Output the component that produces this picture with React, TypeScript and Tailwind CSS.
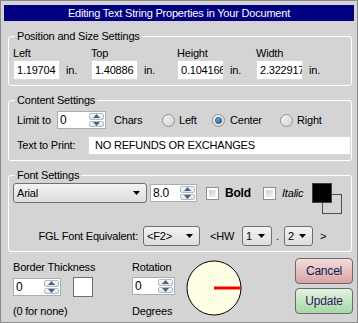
import React from "react";

function SpinArrows() {
  return (
    <div className="flex w-[16px] flex-col gap-[1px] py-[1px] pr-[1px]">
      <div className="flex flex-1 items-center justify-center rounded-[2px] border border-[#b5bac3] bg-gradient-to-b from-[#f7f8fa] to-[#dfe4ec]">
        <svg width="7" height="4" viewBox="0 0 7 4">
          <path d="M3.5 0L7 4H0z" fill="#4d6183" />
        </svg>
      </div>
      <div className="flex flex-1 items-center justify-center rounded-[2px] border border-[#b5bac3] bg-gradient-to-b from-[#f7f8fa] to-[#dfe4ec]">
        <svg width="7" height="4" viewBox="0 0 7 4">
          <path d="M0 0h7L3.5 4z" fill="#4d6183" />
        </svg>
      </div>
    </div>
  );
}

function Spin({ value, w }: { value: string; w: string }) {
  return (
    <div className={`flex h-[18px] ${w} border border-[#abadb3] bg-white`}>
      <div className="flex-1 pl-[2px] text-[12px] leading-[16px]">{value}</div>
      <SpinArrows />
    </div>
  );
}

function Combo({ label, w }: { label: string; w: string }) {
  return (
    <div
      className={`flex h-[20px] ${w} items-center rounded-[3px] border border-[#707070] bg-gradient-to-b from-[#f3f3f3] to-[#dddddd] pl-[3px] pr-[6px]`}
    >
      <span className="flex-1 whitespace-nowrap">{label}</span>
      <svg width="7" height="4" viewBox="0 0 7 4">
        <path d="M0 0h7L3.5 4z" fill="#000" />
      </svg>
    </div>
  );
}

function TextBox({ value, w }: { value: string; w: string }) {
  return (
    <div
      className={`h-[20px] ${w} overflow-hidden whitespace-nowrap border border-[#d8d8d8] bg-white pl-[3px] text-[11px] leading-[18px]`}
    >
      {value}
    </div>
  );
}

function Radio({ checked }: { checked?: boolean }) {
  return (
    <div className="flex h-[13px] w-[13px] items-center justify-center rounded-full border border-[#8e8f8f] bg-gradient-to-br from-[#f4f4f4] to-[#d4d4d4]">
      {checked && (
        <div className="h-[7px] w-[7px] rounded-full border border-[#1b4f86] bg-gradient-to-br from-[#7ab8ea] to-[#1e5fa3]" />
      )}
    </div>
  );
}

function Check() {
  return (
    <div className="h-[13px] w-[13px] border border-[#8e8f8f] bg-white p-[2px]">
      <div className="h-full w-full bg-gradient-to-br from-[#cbcfd5] to-[#f2f3f4]" />
    </div>
  );
}

function Group({ title, className, children }: { title: string; className: string; children: React.ReactNode }) {
  return (
    <div className={`relative ml-[7px] w-[344px] rounded-[3px] border border-white ${className}`}>
      <span className="absolute -top-[7px] left-[6px] bg-[#d4d4d4] px-[2px] leading-[13px]">{title}</span>
      {children}
    </div>
  );
}

export default function App() {
  return (
    <div className="h-[323px] w-[358px] overflow-hidden border border-[#8a8a8a] bg-[#d4d4d4] font-['Liberation_Sans',Arial,sans-serif] text-[11px] tracking-[-0.2px] text-black">
      <div className="mx-[3px] mt-[4px] h-[16px] bg-[#000080] text-center leading-[16px] text-white">
        Editing Text String Properties in Your Document
      </div>

      <Group title="Position and Size Settings" className="mt-[15px] pb-[5px] pl-[4px] pt-[10px]">
        <div className="flex">
          {[
            ["Left", "1.19704", "w-[78px]"],
            ["Top", "1.40886", "w-[86px]"],
            ["Height", "0.104166", "w-[79px]"],
            ["Width", "2.322917", "w-[80px]"],
          ].map(([label, value, w]) => (
            <div key={label} className={w}>
              <div className="leading-[13px]">{label}</div>
              <div className="flex items-center">
                <TextBox value={value} w="w-[47px]" />
                <span className="ml-[6px]">in.</span>
              </div>
            </div>
          ))}
        </div>
      </Group>

      <Group title="Content Settings" className="mt-[14px] pb-[5px] pl-[8px] pt-[10px]">
        <div className="flex h-[18px] items-center">
          <span className="w-[40px]">Limit to</span>
          <Spin value="0" w="w-[49px]" />
          <span className="ml-[8px] w-[48px]">Chars</span>
          <div className="flex w-[50px] items-center gap-[4px]">
            <Radio />
            <span>Left</span>
          </div>
          <div className="flex w-[68px] items-center gap-[5px]">
            <Radio checked />
            <span>Center</span>
          </div>
          <div className="flex items-center gap-[4px]">
            <Radio />
            <span>Right</span>
          </div>
        </div>
        <div className="mt-[7px] flex items-center">
          <span className="w-[71px]">Text to Print:</span>
          <div className="h-[19px] flex-1 border border-[#d8d8d8] bg-white pl-[6px] leading-[17px]">
            NO REFUNDS OR EXCHANGES
          </div>
        </div>
      </Group>

      <Group title="Font Settings" className="mt-[14px] pb-[5px] pl-[4px] pt-[7px]">
        <div className="flex h-[20px] items-center">
          <Combo label="Arial" w="w-[134px]" />
          <div className="ml-[3px]">
            <Spin value="8.0" w="w-[47px]" />
          </div>
          <div className="ml-[9px] flex w-[57px] items-center gap-[6px]">
            <Check />
            <span className="text-[12px] font-bold">Bold</span>
          </div>
          <div className="flex w-[49px] items-center gap-[6px]">
            <Check />
            <span className="italic">Italic</span>
          </div>
          <div className="relative h-[20px] w-[31px] self-start">
            <div className="absolute left-[10px] top-[11px] h-[20px] w-[20px] border border-[#505050]" />
            <div className="absolute left-0 top-0 h-[20px] w-[20px] border border-[#404040] bg-black" />
          </div>
        </div>
        <div className="mt-[23px] flex h-[20px] items-center">
          <span className="w-[130px] whitespace-nowrap pr-[5px] text-right">FGL Font Equivalent:</span>
          <Combo label="<F2>" w="w-[57px]" />
          <span className="ml-[10px] w-[32px]">&lt;HW</span>
          <Combo label="1" w="w-[30px]" />
          <span className="w-[12px] pl-[4px]">.</span>
          <Combo label="2" w="w-[29px]" />
          <span className="ml-[7px]">&gt;</span>
        </div>
      </Group>

      <div className="flex items-start pl-[12px]">
        <div className="mt-[9px] w-[119px]">
          <div className="leading-[13px]">Border Thickness</div>
          <div className="mt-[3px] flex items-center">
            <Spin value="0" w="w-[48px]" />
            <div className="ml-[12px] h-[20px] w-[20px] border border-[#707070] bg-white" />
          </div>
          <div className="mt-[8px] leading-[13px]">(0 for none)</div>
        </div>
        <div className="mt-[9px] w-[54px]">
          <div className="leading-[13px]">Rotation</div>
          <div className="mt-[3px]">
            <Spin value="0" w="w-[43px]" />
          </div>
          <div className="mt-[10px] leading-[13px]">Degrees</div>
        </div>
        <svg className="mt-[8px]" width="56" height="56" viewBox="0 0 56 56">
          <circle cx="28" cy="28" r="27" fill="#ffffe6" stroke="#000" strokeWidth="1" />
          <line x1="28" y1="28" x2="55" y2="28" stroke="#ff0000" strokeWidth="3" />
        </svg>
        <div className="ml-[53px] mt-[6px] flex flex-col gap-[4px]">
          <button className="h-[26px] w-[58px] rounded-[4px] border border-[#6a6a6a] bg-gradient-to-b from-[#f3dcdc] to-[#d9a3a3] text-[12px] text-[#0b1a5a]">
            Cancel
          </button>
          <button className="h-[26px] w-[58px] rounded-[4px] border border-[#6a6a6a] bg-gradient-to-b from-[#e4f4e4] to-[#a4d8a4] text-[12px] text-[#3d1366]">
            Update
          </button>
        </div>
      </div>
    </div>
  );
}
